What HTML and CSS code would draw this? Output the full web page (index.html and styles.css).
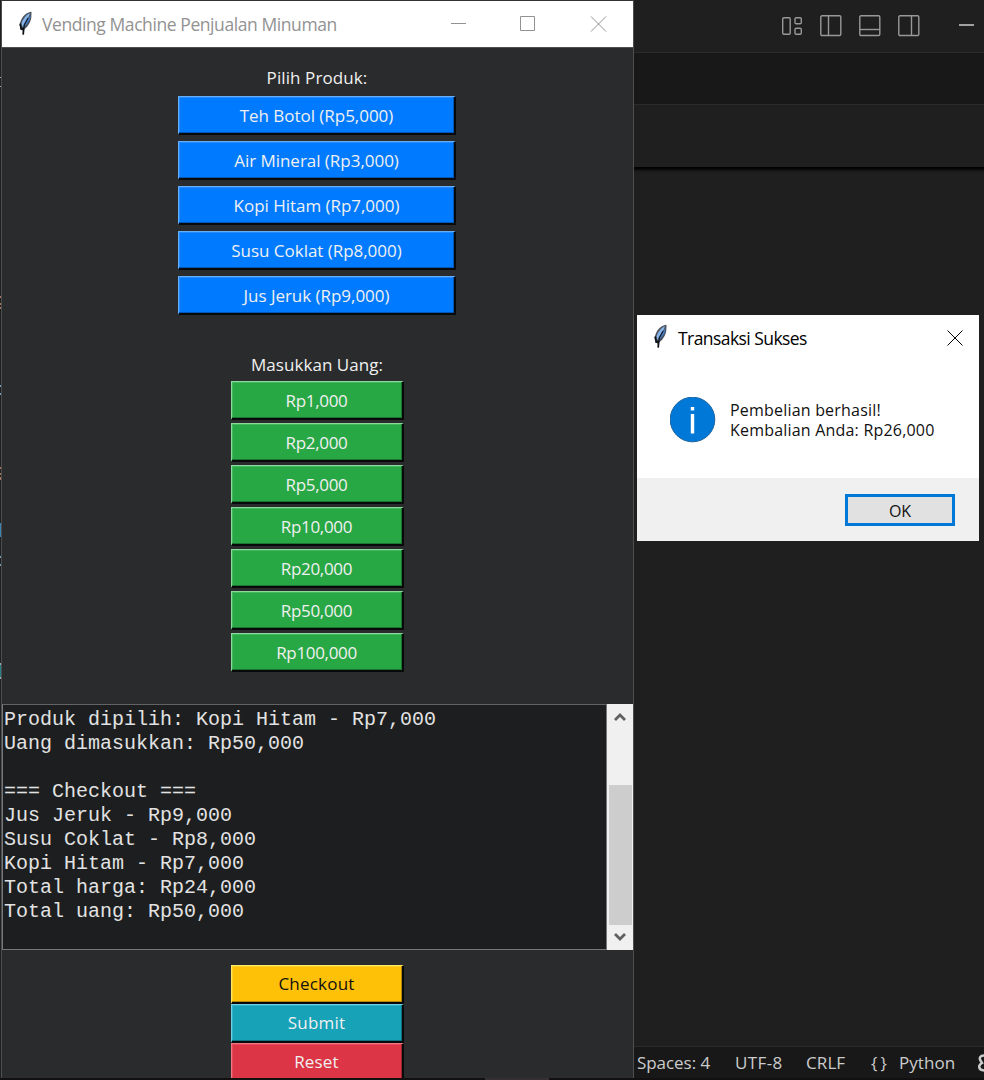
FILE: index.html
```html
<!DOCTYPE html>
<html lang="id">
<head>
<meta charset="utf-8">
<title>Vending Machine Penjualan Minuman</title>
<link rel="stylesheet" href="styles.css">
</head>
<body>
<svg width="0" height="0" class="defs">
  <symbol id="feather" viewBox="0 0 16 24">
    <path d="M14.500.8C10 1 5 5.500 3.300 11L2.500 14l1.300 5 2 .3C10 17 13.500 12 14.300 6.500z" fill="#4a5058"/>
    <path d="M13 2.300C9.500 3.500 5.500 8 4.500 13l.8 3L12 5z" fill="#86b4ea"/>
    <path d="M13.500 4L9 11l-3 5.500c3.500-2.500 6.500-6 7.200-9.500z" fill="#4479c4"/>
    <path d="M11 7L7.500 13.500 6.300 23.500" fill="none" stroke="#14202f" stroke-width="1.200"/>
    <path d="M3.200 12.500l1 5.500 2.600-.8M6.300 17v6.500" fill="none" stroke="#0c1016" stroke-width="1.600"/>
  </symbol>
</svg>
<div class="desktop">
  <div class="editor">
    <header class="editor-title">
      <svg class="layout-icon" viewBox="0 0 22 22"><g class="line"><rect x="1.700" y="2.700" width="7.500" height="16.500" rx="1.200"/><rect x="14" y="2.700" width="6.300" height="6" rx="1.200"/><rect x="14" y="13.200" width="6.300" height="6" rx="1.200"/></g></svg>
      <svg class="layout-icon" viewBox="0 0 22 22"><g class="line"><rect x=".8" y=".8" width="20" height="19.700" rx="1.200"/><path d="M8.500 1v19.500"/></g></svg>
      <svg class="layout-icon" viewBox="0 0 22 22"><g class="line"><rect x=".8" y=".8" width="20" height="19.700" rx="1.200"/><path d="M1 14.500h20"/></g></svg>
      <svg class="layout-icon" viewBox="0 0 22 22"><g class="line"><rect x=".8" y=".8" width="20" height="19.700" rx="1.200"/><path d="M13.500 1v19.500"/></g></svg>
      <i class="dash"></i>
    </header>
    <div class="tabs"></div>
    <div class="crumbs"></div>
    <main class="code"></main>
    <footer class="status">
      <span class="spaces">Spaces: 4</span><span class="utf">UTF-8</span><span class="crlf">CRLF</span><span class="braces">{}</span><span class="python">Python</span>
      <svg class="bell" viewBox="0 0 6 18"><path d="M6 1.500C2 1.500 1 4 2.500 6.500L4 9C0 11 0 16 6 16.500" fill="none" stroke="#ccc" stroke-width="2.500"/></svg>
    </footer>
  </div>
  <div class="taskbar"><i></i></div>
  <svg class="code-edge" viewBox="0 0 1 1080" preserveAspectRatio="none">
    <path d="M.5 296v2M.5 303v2M.5 307v2M.5 467v2M.5 473v2M.5 477v3" stroke="#a87862"/>
    <path d="M.5 385v2M.5 393v2M.5 556v2M.5 564v2" stroke="#779db5"/>
    <path d="M.5 523v14" stroke="#3b83b5"/>
    <path d="M.5 664v14" stroke="#267e87"/>
    <path d="M.5 77v1M.5 86v1M.5 663v2M.5 677v2" stroke="#aaa"/>
  </svg>

  <section class="app">
    <header class="app-title">
      <svg class="feather"><use href="#feather"/></svg>
      <h1>Vending Machine Penjualan Minuman</h1>
      <svg class="controls" viewBox="0 0 160 18"><path d="M0 8.500h15M69.500 1.500h14v14h-14zM140 1.500l15 15M155 1.500l-15 15"/></svg>
    </header>
    <div class="products">
      <p>Pilih Produk:</p>
      <button class="blue">Teh Botol (Rp5,000)</button>
      <button class="blue">Air Mineral (Rp3,000)</button>
      <button class="blue">Kopi Hitam (Rp7,000)</button>
      <button class="blue">Susu Coklat (Rp8,000)</button>
      <button class="blue">Jus Jeruk (Rp9,000)</button>
    </div>
    <div class="money">
      <p>Masukkan Uang:</p>
      <button class="green">Rp1,000</button>
      <button class="green">Rp2,000</button>
      <button class="green">Rp5,000</button>
      <button class="green">Rp10,000</button>
      <button class="green">Rp20,000</button>
      <button class="green">Rp50,000</button>
      <button class="green">Rp100,000</button>
    </div>
    <div class="log">
      <pre>Produk dipilih: Kopi Hitam - Rp7,000
Uang dimasukkan: Rp50,000

=== Checkout ===
Jus Jeruk - Rp9,000
Susu Coklat - Rp8,000
Kopi Hitam - Rp7,000
Total harga: Rp24,000
Total uang: Rp50,000</pre>
      <div class="scrollbar">
        <svg viewBox="0 0 12 10"><path d="M1 8l5-5 5 5"/></svg>
        <i></i>
        <svg viewBox="0 0 12 10"><path d="M1 2l5 5 5-5"/></svg>
      </div>
    </div>
    <div class="actions">
      <button class="yellow">Checkout</button>
      <button class="teal">Submit</button>
      <button class="red">Reset</button>
    </div>
  </section>

  <section class="dialog">
    <header>
      <svg class="feather"><use href="#feather"/></svg>
      <h2>Transaksi Sukses</h2>
      <svg class="close" viewBox="0 0 16 16"><path d="M.5.5l15 15M15.500.5l-15 15"/></svg>
    </header>
    <div class="message">
      <svg class="info" viewBox="0 0 46 46"><circle cx="22.500" cy="22.500" r="22.300" fill="#0078d7" stroke="#17629f"/><path d="M20.800 10h3.400v3.400h-3.400zM20.800 17h3.400v19.500h-3.400z" fill="#fff"/></svg>
      <div class="message-text">
        <p>Pembelian berhasil!</p>
        <p>Kembalian Anda: Rp26,000</p>
      </div>
    </div>
    <footer><button class="ok">OK</button></footer>
  </section>
</div>
</body>
</html>
```
FILE: styles.css
```css
* { box-sizing: border-box; }
body { margin: 0; background: #1f1f1f; font-family: "Open Sans", "Noto Sans", sans-serif; }
h1, h2, p, pre { margin: 0; font-weight: 400; }
svg { display: block; flex: none; }
.defs { position: absolute; }
.desktop { position: relative; width: 984px; height: 1080px; overflow: hidden; background: #1f1f1f; }

.editor { height: 1078px; margin-left: 633px; display: flex; flex-direction: column; background: #1f1f1f; }
.editor-title { height: 53px; border-bottom: 1px solid #2b2b2b; display: flex; padding: 15px 0 0 148px; gap: 17px; }
.layout-icon { width: 22px; height: 22px; }
.line { fill: none; stroke: #989898; stroke-width: 1.4; }
.dash { width: 15px; height: 2px; margin: 9px 0 0 22px; background: #a0a0a0; flex: none; }
.tabs { height: 52px; background: #181818; border-bottom: 1px solid #2b2b2b; }
.crumbs { height: 62px; }
.code { flex: 1; background: linear-gradient(#000 0, #060606 2px, #1a1a1a 4px, #1f1f1f 7px); }
.status { height: 32px; background: #181818; border-top: 1px solid #2b2b2b; display: flex; align-items: center; color: #ccc; font-size: 17px; white-space: nowrap; padding-left: 4px; line-height: 30px; }
.status span { flex: none; }
.spaces { width: 98px; letter-spacing: -.05px; }
.utf { width: 71px; letter-spacing: .4px; }
.crlf { width: 65px; letter-spacing: .1px; }
.braces { width: 28px; letter-spacing: 3px; }
.python { width: 79px; letter-spacing: .05px; }
.bell { width: 6px; height: 18px; }
.taskbar { height: 2px; background: #121011; }
.taskbar i { display: block; width: 64px; height: 2px; margin-left: 485px; background: #343031; }
.code-edge { position: absolute; left: 0; top: 0; width: 1px; height: 1080px; }

.app { position: absolute; left: 1px; top: 0; width: 633px; height: 1078px; overflow: hidden; background: #2a2b2d; border: 1px solid #4c4e4f; border-top-color: #353132; border-bottom: 0; }
.app-title { height: 47px; margin: 0 0 0 -1px; background: #fff; border-bottom: 1px solid #4c4e4f; display: flex; padding-left: 16px; }
.feather { width: 16px; height: 24px; }
.app-title .feather { margin-top: 10px; }
.app-title h1 { width: 410px; margin-left: 9px; color: #929292; font-size: 17.500px; line-height: 46px; letter-spacing: -.42px; white-space: nowrap; }
.controls { width: 160px; height: 18px; margin: 14px 0 0 -1px; fill: none; stroke: #929292; }
.products, .money, .actions { display: flex; flex-direction: column; align-items: center; color: #f0f0f0; font-size: 17px; }
.products, .money p { padding-right: 1px; }
.products p, .money p { line-height: 24px; }
.products { padding-top: 18px; gap: 6px; letter-spacing: -.03px; }
.products p { letter-spacing: .1px; }
.products button { width: 278px; }
.money { padding-top: 38px; gap: 3px; letter-spacing: -.33px; }
.money p { margin-bottom: 1px; letter-spacing: .05px; }
.app button { height: 39px; flex: none; border: 1px solid var(--light); border-right: 2px solid #08090b; border-bottom: 2px solid #08090b; font: inherit; letter-spacing: inherit; color: #f0f0f0; padding: 1px 0 0; line-height: 34px; }
.money button, .actions button { width: 173px; margin-left: -1px; }
.actions button { padding: 0; }
.blue { --light: #66aef5; background: #007bff; box-shadow: inset -1px -1px #0057b5, inset 1px 1px #268bff; }
.green { --light: #8bd99b; background: #28a745; box-shadow: inset -1px -1px #1b7430, inset 1px 1px #45b85f; }
.app .yellow { --light: #ffe866; background: #ffc107; box-shadow: inset -1px -1px #b4870a, inset 1px 1px #ffd028; color: #111; }
.teal { --light: #70d2e0; background: #17a2b8; box-shadow: inset -1px -1px #107181, inset 1px 1px #31b2c6; }
.red { --light: #ee7984; background: #dc3545; box-shadow: inset -1px -1px #992531, inset 1px 1px #e34b59; }
.log { height: 246px; margin-top: 32px; display: flex; background: #1d1e20; }
.log pre { flex: 1; border: 1px solid #777; border-top-color: #626364; padding: 3px 0 0 1px; color: #e2e2e2; font: 20px/24px "Liberation Mono", monospace; }
.scrollbar { width: 26px; background: #f0f0f0; display: flex; flex-direction: column; align-items: center; padding: 8px 0; }
.scrollbar svg { width: 12px; height: 10px; fill: none; stroke: #606060; stroke-width: 2.800; }
.scrollbar i { width: 23px; height: 140px; margin: 63px 0 7px; background: #cdcdcd; }
.actions { padding-top: 15px; letter-spacing: .2px; }

.dialog { position: absolute; left: 637px; top: 315px; width: 342px; height: 226px; background: #fff; display: flex; flex-direction: column; color: #000; }
.dialog header { height: 48px; display: flex; padding-left: 15px; }
.dialog .feather { margin-top: 9px; }
.dialog h2 { width: 269px; margin-left: 10px; font-size: 17.500px; line-height: 47px; letter-spacing: -.56px; white-space: nowrap; }
.close { width: 16px; height: 16px; margin-top: 15px; fill: none; stroke: #000; stroke-width: 1; }
.message { height: 115px; display: flex; padding: 33px 0 0 33px; gap: 14px; }
.info { width: 46px; height: 46px; margin-top: 1px; }
.message-text { margin-top: 4px; font-size: 16px; line-height: 20px; letter-spacing: .2px; color: #111; white-space: nowrap; }
.dialog footer { height: 63px; background: #f0f0f0; padding: 16px 24px 0 0; display: flex; justify-content: flex-end; }
.ok { width: 110px; height: 32px; border: 3px solid #0078d7; background: #e1e1e1; font: 16px/24px "Open Sans", sans-serif; color: #111; padding: 1px 0 0; }
```
